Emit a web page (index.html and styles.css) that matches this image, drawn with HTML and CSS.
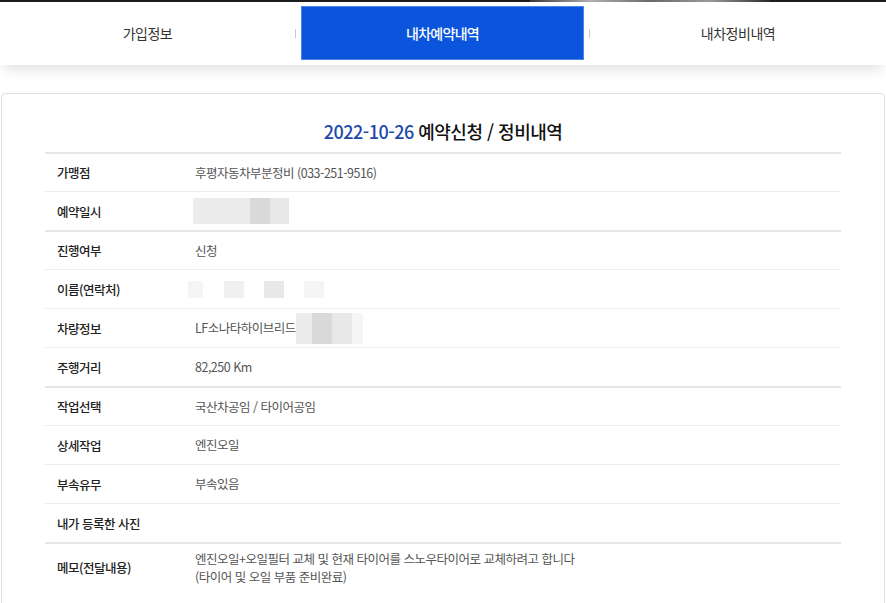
FILE: index.html
```html
<!DOCTYPE html>
<html lang="ko">
<head>
<meta charset="utf-8">
<link rel="stylesheet" href="styles.css">
</head>
<body>
<div class="topstrip"><span class="strip-photo"></span></div>
<nav class="tabs">
  <div class="tab">가입정보</div>
  <div class="sep"></div>
  <div class="tab active">내차예약내역</div>
  <div class="sep"></div>
  <div class="tab">내차정비내역</div>
</nav>
<main class="card">
  <h1 class="title"><span class="date">2022-10-26</span> 예약신청 / 정비내역</h1>
  <div class="table">
    <div class="row group"><div class="label">가맹점</div><div class="value">후평자동차부분정비 (033-251-9516)</div></div>
    <div class="row"><div class="label">예약일시</div><div class="value"><span class="blur b1"><i class="s1 w57"></i><i class="s3 w20"></i><i class="s2 w19"></i></span></div></div>
    <div class="row group"><div class="label">진행여부</div><div class="value">신청</div></div>
    <div class="row"><div class="label">이름(연락처)</div><div class="value"><span class="blur b2"><i class="s4 w15"></i><i class="s0 w21"></i><i class="s5 w20"></i><i class="s0 w20"></i><i class="s2 w20"></i><i class="s0 w20"></i><i class="s4 w20"></i></span></div></div>
    <div class="row"><div class="label">차량정보</div><div class="value">LF소나타하이브리드<span class="blur b3"><i class="s1 w16"></i><i class="s3 w20"></i><i class="s2 w20"></i><i class="s4 w11"></i></span></div></div>
    <div class="row"><div class="label">주행거리</div><div class="value">82,250 Km</div></div>
    <div class="row group"><div class="label">작업선택</div><div class="value">국산차공임 / 타이어공임</div></div>
    <div class="row"><div class="label">상세작업</div><div class="value">엔진오일</div></div>
    <div class="row"><div class="label">부속유무</div><div class="value">부속있음</div></div>
    <div class="row"><div class="label">내가 등록한 사진</div><div class="value"></div></div>
    <div class="row group memo"><div class="label">메모(전달내용)</div><div class="value">엔진오일+오일필터 교체 및 현재 타이어를 스노우타이어로 교체하려고 합니다<br>(타이어 및 오일 부품 준비완료)</div></div>
  </div>
</main>
</body>
</html>
```
FILE: styles.css
```css
* { box-sizing: border-box; }
html, body { margin: 0; padding: 0; background: #fff; }
body {
  font-family: "Noto Sans CJK KR", "Noto Sans", sans-serif;
  color: #222;
  width: 886px;
  overflow: hidden;
}
.topstrip {
  height: 2px;
  background: #1c1c1c;
  display: flex;
}
.strip-photo {
  margin-left: 530px;
  width: 240px;
  height: 2px;
  background: linear-gradient(90deg, #3a3a3a, #b0b0b0 25%, #6a6a6a 50%, #9a9a9a 75%, #2a2a2a);
}
.tabs {
  height: 63px;
  display: flex;
  align-items: flex-start;
  background: #fff;
  box-shadow: 0 8px 12px -4px rgba(0,0,0,0.13);
  position: relative;
  z-index: 1;
}
.tab {
  flex: 1;
  height: 54px;
  margin-top: 4px;
  display: flex;
  align-items: center;
  justify-content: center;
  font-size: 14px;
  color: #333;
  letter-spacing: -0.5px;
}
.tab.active {
  flex: 0 0 283px;
  margin-left: 5px;
  margin-right: 5px;
  background: #0a55dc;
  border: 1px solid #4a86ea;
  color: #fff;
  font-weight: 500;
  letter-spacing: -0.7px;
}
.tab:first-child { flex: 0 0 295px; }
.sep {
  width: 1px;
  height: 9px;
  margin-top: 27px;
  background: #c8c8c8;
}
.card {
  margin: 28px 1px 0 1px;
  border: 1px solid #dedede;
  border-radius: 4px;
  padding: 0 43px 20px 43px;
  height: 560px;
}
.title {
  margin: 0;
  padding: 24px 0 8px;
  text-align: center;
  font-size: 18px;
  line-height: 26px;
  font-weight: 500;
  color: #111;
  letter-spacing: -0.5px;
}
.title .date { color: #1d4aa8; }
.row {
  display: flex;
  align-items: center;
  height: 39px;
  border-top: 1px solid #ececec;
  font-size: 12.5px;
  letter-spacing: -0.5px;
}
.row.group { border-top: 2px solid #e6e6e6; }
.row.memo { height: 48px; }
.label {
  width: 150px;
  padding-left: 12px;
  font-weight: 500;
  color: #222;
}
.value {
  color: #555;
  line-height: 18px;
  display: flex;
  align-items: center;
}
.memo .value { display: block; padding-top: 1px; }
.blur { display: inline-flex; }
.blur i { display: block; }
.b1 { height: 26px; margin-left: -2px; }
.b2 { height: 17px; margin-left: -7px; }
.b3 { height: 31px; }
.s0 { background: #fff; }
.s1 { background: #ececec; }
.s2 { background: #e8e8e8; }
.s3 { background: #d9d9d9; }
.s4 { background: #f5f5f5; }
.s5 { background: #f0f0f0; }
.w11 { width: 11px; }
.w15 { width: 15px; }
.w16 { width: 16px; }
.w19 { width: 19px; }
.w20 { width: 20px; }
.w21 { width: 21px; }
.w57 { width: 57px; }
```
